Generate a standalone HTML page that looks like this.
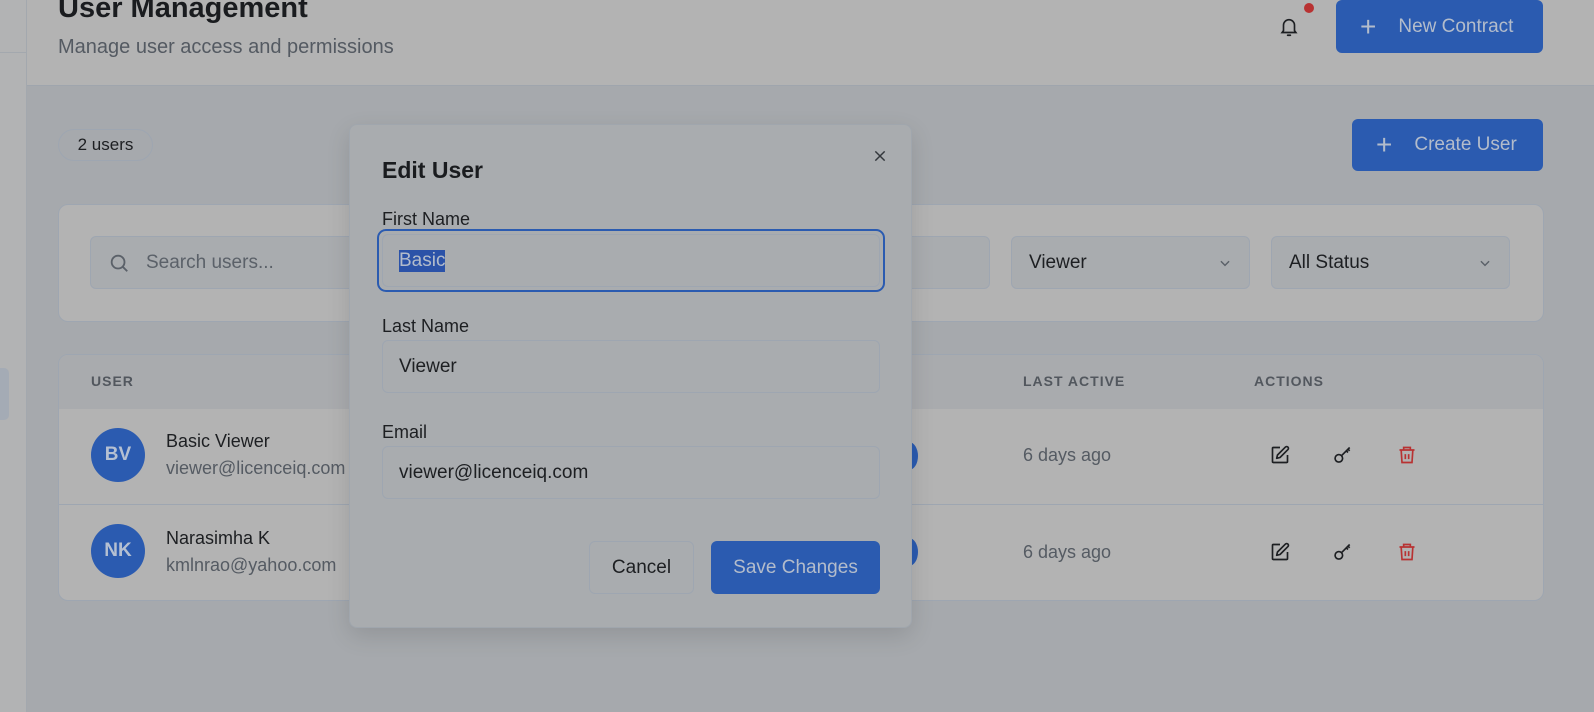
<!DOCTYPE html>
<html><head><meta charset="utf-8"><style>
*{box-sizing:border-box;margin:0;padding:0}
body{width:1594px;height:712px;overflow:hidden;background:#a6a9ad;font-family:"Liberation Sans",sans-serif;position:relative;color:#1d1f22}
.abs{position:absolute}
.side{left:0;top:0;width:27px;height:712px;background:#b2b3b4;border-right:1px solid #a3a8ae}
.hdr{left:27px;top:0;width:1567px;height:86px;background:#b3b3b3;border-bottom:1px solid #9fa5ad}
.btn{background:#2b5bb0;color:#b3bccb;border-radius:6px;font-size:19px;display:flex;align-items:center}
.card{background:#b3b3b3;border:1px solid #9ea6b1;border-radius:10px}
.inp{background:#a9acaf;border:1px solid #9ea6b1;border-radius:6px;font-size:19px;display:flex;align-items:center}
.th{font-size:14px;letter-spacing:1px;color:#52575e;font-weight:bold}
.av{width:54px;height:54px;border-radius:50%;background:#2b5bb0;color:#b5c0d2;font-weight:bold;font-size:19px;display:flex;align-items:center;justify-content:center}
.nm{font-size:18px;color:#1d1f22}
.em{font-size:18px;color:#555b63}
.modal{left:349px;top:124px;width:563px;height:504px;background:#a9acaf;border:1px solid #a0a6ad;border-radius:8px;box-shadow:0 8px 24px rgba(0,0,0,.12)}
.lbl{font-size:18px;color:#1d1f22}
</style></head><body>
<div class="abs side"><div class="abs" style="left:0;top:52px;width:26px;border-top:1px solid #a3a8ae"></div><div class="abs" style="left:0;top:368px;width:9px;height:52px;background:#a4abb5;border-radius:0 5px 5px 0"></div></div>
<div class="abs hdr"></div>
<div class="abs" style="left:58px;top:-8px;font-size:29px;font-weight:bold;color:#1a1c1f">User Management</div>
<div class="abs" style="left:58px;top:36px;font-size:20px;color:#545a62">Manage user access and permissions</div>
<svg class="abs" style="left:1278px;top:16px" width="22" height="22" viewBox="0 0 24 24" fill="none" stroke="#1d1f22" stroke-width="1.8" stroke-linecap="round"><path d="M6 16V10a6 6 0 0 1 12 0v6l1.5 2h-15z"/><path d="M10.5 21h3"/></svg>
<div class="abs" style="left:1304px;top:3px;width:10px;height:10px;border-radius:50%;background:#b83232"></div>
<div class="abs btn" style="left:1336px;top:0;width:207px;height:53px"><span style="margin-left:24px;font-size:28px;font-weight:300">+</span><span style="margin-left:22px">New Contract</span></div>
<div class="abs" style="left:58px;top:129px;width:95px;height:32px;border:1px solid #9ea6b1;border-radius:16px;font-size:17px;display:flex;align-items:center;justify-content:center;color:#1d1f22">2 users</div>
<div class="abs btn" style="left:1352px;top:119px;width:191px;height:52px"><span style="margin-left:24px;font-size:28px;font-weight:300">+</span><span style="margin-left:22px">Create User</span></div>
<div class="abs card" style="left:58px;top:204px;width:1486px;height:118px"></div>
<div class="abs inp" style="left:90px;top:236px;width:900px;height:53px;color:#5b6169"><svg style="margin-left:17px" width="22" height="22" viewBox="0 0 24 24" fill="none" stroke="#5b6169" stroke-width="2"><circle cx="11" cy="11" r="7"/><path d="M16 16l5 5"/></svg><span style="margin-left:16px">Search users...</span></div>
<div class="abs inp" style="left:1011px;top:236px;width:239px;height:53px;padding:0 17px;justify-content:space-between">Viewer<svg width="14" height="14" viewBox="0 0 24 24" fill="none" stroke="#5b6169" stroke-width="2.5"><path d="M5 9l7 7 7-7"/></svg></div>
<div class="abs inp" style="left:1271px;top:236px;width:239px;height:53px;padding:0 17px;justify-content:space-between">All Status<svg width="14" height="14" viewBox="0 0 24 24" fill="none" stroke="#5b6169" stroke-width="2.5"><path d="M5 9l7 7 7-7"/></svg></div>
<div class="abs card" style="left:58px;top:354px;width:1486px;height:247px;overflow:hidden">
 <div class="abs" style="left:0;top:0;width:100%;height:54px;background:#a9abae"></div>
 <div class="abs" style="left:0;top:54px;width:100%;height:96px;border-bottom:1px solid #9ea6b1"></div>
</div>
<div class="abs th" style="left:91px;top:373px">USER</div>
<div class="abs th" style="left:1023px;top:373px">LAST ACTIVE</div>
<div class="abs th" style="left:1254px;top:373px">ACTIONS</div>
<div class="abs av" style="left:91px;top:428px">BV</div>
<div class="abs nm" style="left:166px;top:431px">Basic Viewer</div>
<div class="abs em" style="left:166px;top:458px">viewer@licenceiq.com</div>
<div class="abs av" style="left:91px;top:524px">NK</div>
<div class="abs nm" style="left:166px;top:528px">Narasimha K</div>
<div class="abs em" style="left:166px;top:555px">kmlnrao@yahoo.com</div>
<div class="abs em" style="left:1023px;top:445px">6 days ago</div>
<div class="abs em" style="left:1023px;top:542px">6 days ago</div>
<svg class="abs" style="left:1270px;top:445px" width="20" height="20" viewBox="0 0 24 24" fill="none" stroke="#1d1f22" stroke-width="2" stroke-linejoin="round"><path d="M12 3H4a1 1 0 0 0-1 1v16a1 1 0 0 0 1 1h16a1 1 0 0 0 1-1v-8"/><path d="M18.5 2.5a2.1 2.1 0 0 1 3 3L12 15l-4 1 1-4z"/></svg>
<svg class="abs" style="left:1333px;top:445px" width="20" height="20" viewBox="0 0 24 24" fill="none" stroke="#1d1f22" stroke-width="2"><circle cx="7" cy="16" r="4.5"/><path d="M10.5 12.5L20 3M16 7l2 2M18 5l2 2"/></svg>
<svg class="abs" style="left:1397px;top:445px" width="20" height="20" viewBox="0 0 24 24" fill="none" stroke="#b83232" stroke-width="2"><path d="M3 6h18M8 6V3h8v3M5 6l1 15h12l1-15M10 11v6M14 11v6"/></svg>
<svg class="abs" style="left:1270px;top:542px" width="20" height="20" viewBox="0 0 24 24" fill="none" stroke="#1d1f22" stroke-width="2" stroke-linejoin="round"><path d="M12 3H4a1 1 0 0 0-1 1v16a1 1 0 0 0 1 1h16a1 1 0 0 0 1-1v-8"/><path d="M18.5 2.5a2.1 2.1 0 0 1 3 3L12 15l-4 1 1-4z"/></svg>
<svg class="abs" style="left:1333px;top:542px" width="20" height="20" viewBox="0 0 24 24" fill="none" stroke="#1d1f22" stroke-width="2"><circle cx="7" cy="16" r="4.5"/><path d="M10.5 12.5L20 3M16 7l2 2M18 5l2 2"/></svg>
<svg class="abs" style="left:1397px;top:542px" width="20" height="20" viewBox="0 0 24 24" fill="none" stroke="#b83232" stroke-width="2"><path d="M3 6h18M8 6V3h8v3M5 6l1 15h12l1-15M10 11v6M14 11v6"/></svg>
<div class="abs" style="left:900px;top:442px;width:18px;height:28px;border-radius:50%;background:#2b5bb0"></div>
<div class="abs" style="left:900px;top:538px;width:18px;height:28px;border-radius:50%;background:#2b5bb0"></div>
<div class="abs modal">
 <div class="abs" style="left:32px;top:32px;font-size:23px;font-weight:bold;color:#1a1c1f">Edit User</div>
 <svg class="abs" style="left:522px;top:23px" width="16" height="16" viewBox="0 0 24 24" fill="none" stroke="#33373c" stroke-width="2.2"><path d="M5 5l14 14M19 5L5 19"/></svg>
 <div class="abs lbl" style="left:32px;top:84px">First Name</div>
 <div class="abs" style="left:27px;top:104px;width:508px;height:63px;border:2px solid #2b5bb0;border-radius:9px"></div>
 <div class="abs inp" style="left:32px;top:109px;width:498px;height:53px;padding-left:16px"><span style="background:#2b52a8;color:#b3bccb">Basic</span></div>
 <div class="abs lbl" style="left:32px;top:191px">Last Name</div>
 <div class="abs inp" style="left:32px;top:215px;width:498px;height:53px;padding-left:16px">Viewer</div>
 <div class="abs lbl" style="left:32px;top:297px">Email</div>
 <div class="abs inp" style="left:32px;top:321px;width:498px;height:53px;padding-left:16px">viewer@licenceiq.com</div>
 <div class="abs inp" style="left:239px;top:416px;width:105px;height:53px;justify-content:center;font-size:19px">Cancel</div>
 <div class="abs btn" style="left:361px;top:416px;width:169px;height:53px;justify-content:center;font-size:19px">Save Changes</div>
</div>
</body></html>
